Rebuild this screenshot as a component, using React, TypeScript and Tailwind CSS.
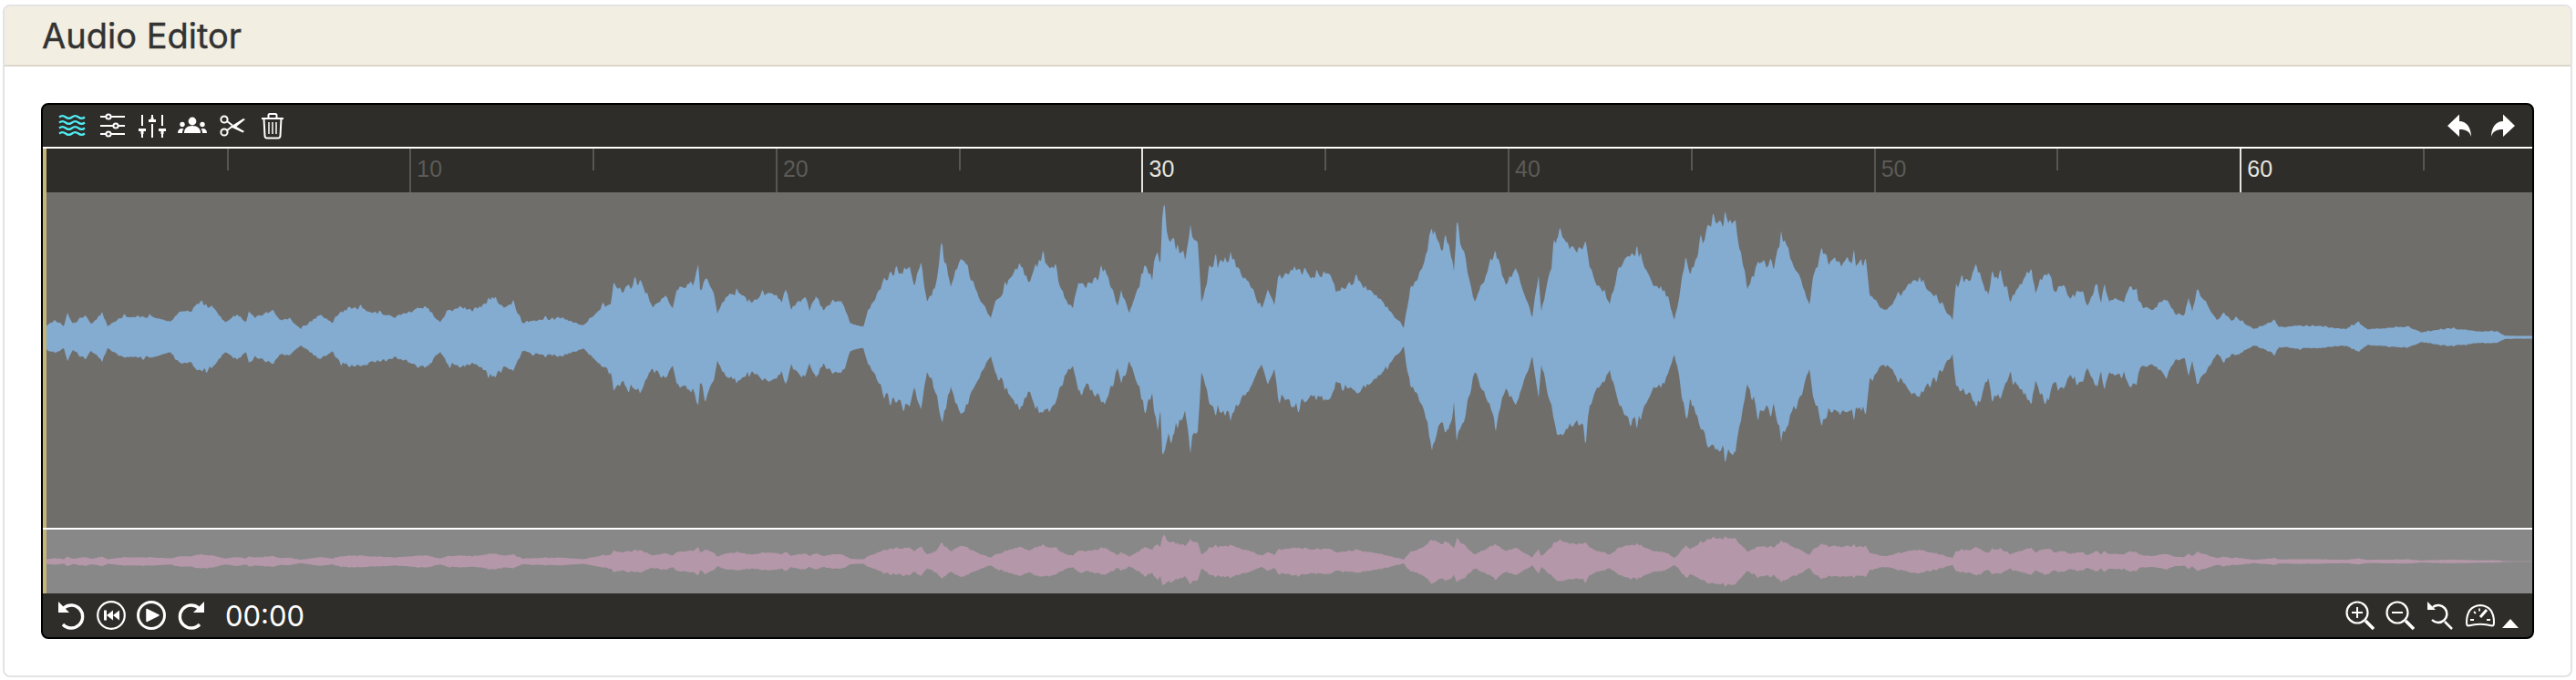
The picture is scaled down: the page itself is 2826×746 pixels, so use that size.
import React from "react";

// outline of the upper half of the wave, [page x, height above centre]
const HULL: [number, number][] = [
  [51,14],[60,20],[70,14],[74,30],[80,16],[93,27],[100,16],[112,30],[118,14],[133,25],[167,25],[187,18],[197,33],[207,30],[218,42],[233,37],[247,19],[260,28],[270,19],[273,33],[280,25],[300,33],[307,21],[317,23],[330,10],[350,27],[365,18],[372,30],[387,37],[433,25],[467,38],[483,18],[490,32],[507,37],
  [520,33],[543,50],[553,35],[563,43],[573,17],[593,22],[617,23],[640,14],[657,33],[670,43],[673,67],[683,58],[702,68],[717,37],[730,50],[738,37],[743,58],[760,67],[766,83],[768,56],[774,73],[783,53],[787,28],[793,45],[810,57],[823,42],[847,57],[857,43],[862,62],[868,35],[883,50],[888,33],[895,52],[903,33],[913,43],[923,47],[933,17],[947,13],[953,35],[960,47],[970,70],[993,82],[998,85],[1003,67],[1010,85],[1017,43],
  [1025,60],[1034,108],[1043,60],[1052,95],[1058,93],[1072,55],[1087,23],[1092,43],[1096,47],[1119,93],[1128,68],[1139,93],[1157,82],[1170,45],[1177,35],[1183,70],[1192,60],[1212,83],[1226,38],[1230,58],[1239,30],[1250,65],[1255,88],[1264,72],[1268,105],[1273,95],[1275,143],[1282,125],[1291,112],[1300,95],[1306,133],[1314,120],[1318,43],[1329,85],[1350,100],[1373,60],[1384,33],[1391,58],[1398,42],[1402,73],[1420,85],[1436,75],[1460,78],[1465,58],[1489,68],[1513,48],[1540,12],[1547,60],[1556,70],[1563,97],[1571,137],[1578,113],[1589,112],[1595,78],[1598,130],[1607,100],[1618,42],[1632,83],[1641,103],[1652,66],[1663,83],[1681,25],[1688,73],[1691,32],[1699,73],[1708,122],[1717,117],[1730,107],[1739,115],[1748,72],[1759,53],[1766,43],[1777,85],[1790,102],[1799,103],[1812,67],[1826,57],[1837,22],[1844,57],[1849,97],[1855,80],[1873,132],[1895,140],[1904,140],[1913,83],[1917,60],[1929,90],[1946,87],[1954,125],[1969,87],[1985,42],[1989,72],[1999,105],[2007,92],[2047,92],[2051,53],[2067,32],[2094,63],[2105,73],[2125,47],[2142,22],
  [2146,62],[2162,73],[2169,85],[2181,50],[2185,78],[2195,73],[2205,45],[2213,58],[2229,83],[2233,55],[2238,72],[2247,80],[2252,57],[2264,63],[2271,50],[2285,55],[2290,38],[2301,65],[2305,42],[2309,65],[2314,42],[2320,50],[2330,42],[2336,65],[2344,57],[2348,37],[2362,34],[2376,47],[2387,28],[2397,27],[2401,47],[2405,28],[2410,60],[2420,43],[2432,20],[2440,30],[2448,20],[2453,23],[2473,10],[2495,21],[2501,12],[2520,14],[2548,13],[2573,10],[2588,18],[2597,10],[2642,13],[2656,6],[2687,11],[2720,7],[2739,7],[2748,2],[2780,1.5],
];

const hullAt = (x: number) => {
  let i = 0;
  while (i < HULL.length - 2 && HULL[i + 1][0] < x) i++;
  const [x0, a0] = HULL[i];
  const [x1, a1] = HULL[i + 1];
  const t = Math.min(1, Math.max(0, (x - x0) / (x1 - x0)));
  return a0 + (a1 - a0) * t;
};

const hash = (n: number) => {
  const s = Math.sin(n * 127.1 + 11.7) * 43758.5453;
  return s - Math.floor(s);
};

const noise = (x: number, cell: number, seed: number) => {
  const p = x / cell;
  const i = Math.floor(p);
  const f = p - i;
  return hash(i + seed) * (1 - f) + hash(i + 1 + seed) * f;
};

// thin needles on top of the body, strongest in the loud passages
const needle = (x: number, seed: number) => {
  const cell = 7;
  const i = Math.floor(x / cell);
  if (hash(i + seed) < 0.55) return 0;
  const c = (i + 0.5) * cell;
  return Math.max(0, 1 - Math.abs(x - c) / 2.5) * hash(i + seed + 7);
};

// builds the closed outline, y = centre -/+ amplitude
const wavePath = (centre: number, scale: number) => {
  const top: string[] = [];
  const bottom: string[] = [];
  for (let x = 51; x <= 2779; x++) {
    const a = hullAt(x);
    const n = 0.84 + 0.1 * noise(x, 2, 1) + 0.16 * needle(x, 3);
    const m = 0.84 + 0.1 * noise(x, 2, 1) + 0.16 * needle(x, 90);
    top.push(`${x - 51},${(centre - a * n * scale).toFixed(1)}`);
    bottom.unshift(`${x - 51},${(centre + a * m * 0.98 * scale).toFixed(1)}`);
  }
  return `M${top.join("L")}L${bottom.join("L")}Z`;
};

const MAIN_PATH = wavePath(159, 1);
const OVERVIEW_PATH = wavePath(35, 0.2);

type IconProps = { children: React.ReactNode };

const Icon = ({ children }: IconProps) => (
  <svg width="32" height="32" viewBox="0 0 32 32" fill="none" stroke="white" strokeWidth="2" className="flex-none">
    {children}
  </svg>
);

const ARROW = "M3 16L16 3.500V11C24 11 29 18 29 28 27 21 22 20 16 20V28z";

const TICKS = [
  { label: "" }, { label: "10" }, { label: "" }, { label: "20" }, { label: "" }, { label: "30", bright: true },
  { label: "" }, { label: "40" }, { label: "" }, { label: "50" }, { label: "" }, { label: "60", bright: true }, { label: "" },
];

export default function App() {
  return (
    <div className="bg-white pt-[5px] pl-[3px] pr-[4px] h-[746px]" style={{ fontFamily: "Inter, 'Liberation Sans', sans-serif" }}>
      <div className="border-2 border-[#e3e3e3] rounded-[8px] overflow-hidden bg-white">
        <div className="h-[66px] bg-[#f2eee1] border-b-2 border-[#dbd7ca] pl-[41px] flex items-center">
          <h1 className="text-[38px] font-normal text-[#333333] leading-none [-webkit-text-stroke:0.4px_#333333]">Audio Editor</h1>
        </div>
        <div className="p-10">
          <div className="border-2 border-black rounded-[8px] overflow-hidden bg-[#2e2d29]">
            {/* top toolbar */}
            <div className="h-[46px] px-4 flex items-center justify-between">
              <div className="flex items-center gap-3">
                <Icon>
                  <g stroke="#50eef5" strokeWidth="2.200">
                    <path d="M2 6.500q3.500-2.600 7 0t7 0 7 0 7 0" />
                    <path d="M2 12.500q3.500-2.600 7 0t7 0 7 0 7 0" />
                    <path d="M2 18.500q3.500-2.600 7 0t7 0 7 0 7 0" />
                    <path d="M2 24.500q3.500-2.600 7 0t7 0 7 0 7 0" />
                  </g>
                </Icon>
                <Icon>
                  <path d="M3 6h27M3 16h27M3 25h27" />
                  <circle cx="12" cy="6" r="2.600" fill="#2e2d29" />
                  <circle cx="20" cy="16" r="2.600" fill="#2e2d29" />
                  <circle cx="12" cy="25" r="2.600" fill="#2e2d29" />
                </Icon>
                <Icon>
                  <path d="M5 4v12M5 25v4M16 4v3M16 14v15M27 4v12M27 25v4" />
                  <path d="M1 19h8v3H1zM12 9h8v3h-8zM23 19h8v3h-8z" fill="white" stroke="none" />
                  <path d="M3.500 22h3v3h-3zM14.500 7h3v2h-3zM25.500 22h3v3h-3z" fill="white" stroke="none" />
                </Icon>
                <Icon>
                  <g fill="white" stroke="none">
                    <circle cx="16" cy="11" r="4.400" />
                    <path d="M7 24c0-5 3-8 9-8s9 3 9 8z" />
                    <circle cx="5" cy="14.500" r="2.700" />
                    <circle cx="27" cy="14.500" r="2.700" />
                    <path d="M0 24c0-3 1.500-5 4.500-5 1 0 1.500.2 2 .5C5 21 5 22.500 5 24zM32 24c0-3-1.500-5-4.500-5-1 0-1.500.2-2 .5 1.500 1.500 1.500 3 1.500 4.500z" />
                  </g>
                </Icon>
                <Icon>
                  <circle cx="7" cy="9" r="3.600" />
                  <circle cx="7" cy="23" r="3.600" />
                  <path d="M10 11l6 4.500M10 21l6-4.500" />
                  <path d="M14 17L28 8l2 1-11 9zM17 15l12 7-1.500 1.500L13.500 17z" fill="white" stroke="none" />
                </Icon>
                <Icon>
                  <path d="M4 8h24M11.500 8V4.500q0-1.500 1.500-1.500h6q1.500 0 1.500 1.500V8" />
                  <path d="M6.500 8l1 19q.1 2.500 2.500 2.500h12q2.400 0 2.500-2.500l1-19" />
                  <path d="M12 12v13M16 12v13M20 12v13" strokeWidth="1.500" />
                </Icon>
              </div>
              <div className="flex items-center gap-4">
                <Icon>
                  <path d={ARROW} fill="white" stroke="none" />
                </Icon>
                <Icon>
                  <path d={ARROW} fill="white" stroke="none" transform="matrix(-1 0 0 1 32 0)" />
                </Icon>
              </div>
            </div>
            <div className="h-[2px] bg-white" />

            {/* time ruler */}
            <div className="h-[48px] border-l-4 border-[#c4b57a] flex overflow-hidden">
              <div className="w-[197.500px] flex-none" />
              {TICKS.map((t, i) => (
                <div key={i} className="w-[200.800px] flex-none flex items-start">
                  {t.label ? (
                    <>
                      <div className={t.bright ? "w-[2px] h-full bg-[#e6e4de]" : "w-[2px] h-full bg-[#575652]"} />
                      <span
                        className={t.bright ? "ml-[6px] mt-[7px] text-[25px] leading-[30px] text-[#e6e4de]" : "ml-[6px] mt-[7px] text-[25px] leading-[30px] text-[#5c5b57]"}
                        style={{ fontFamily: "'Liberation Sans', sans-serif" }}
                      >
                        {t.label}
                      </span>
                    </>
                  ) : (
                    <div className="w-[2px] h-6 bg-[#575652]" />
                  )}
                </div>
              ))}
            </div>

            {/* main wave */}
            <div className="h-[368px] border-l-4 border-[#c4b57a] bg-[#6f6e6b]">
              <svg width="2728" height="368" className="block">
                <path d={MAIN_PATH} fill="#84abd0" />
              </svg>
            </div>
            <div className="h-[2px] bg-white" />

            {/* overview */}
            <div className="h-[70px] border-l-4 border-[#c4b57a] bg-[#888888]">
              <svg width="2728" height="70" className="block">
                <path d={OVERVIEW_PATH} fill="#b497a8" />
              </svg>
            </div>

            {/* bottom bar */}
            <div className="h-[48px] px-[15px] flex items-center justify-between">
              <div className="flex items-center gap-3">
                <Icon>
                  <path d="M8 8A12.500 12.500 0 1 1 7 26" strokeWidth="3.400" />
                  <path d="M2 1v12h12z" fill="white" stroke="none" />
                </Icon>
                <Icon>
                  <circle cx="16" cy="16" r="14.800" strokeWidth="2.200" />
                  <path d="M8 10.500h3v11H8zM18 10.500v11l-7-5.500zM25 10.500v11l-7-5.500z" fill="white" stroke="none" />
                </Icon>
                <Icon>
                  <circle cx="16" cy="16" r="14.500" strokeWidth="3" />
                  <path d="M11 9.500L24 16l-13 6.500z" fill="white" stroke="white" strokeWidth="1.500" strokeLinejoin="round" />
                </Icon>
                <Icon>
                  <path d="M24 8A12.500 12.500 0 1 0 25 26" strokeWidth="3.400" />
                  <path d="M30 1v12H18z" fill="white" stroke="none" />
                </Icon>
                <span className="ml-[9px] text-[31px] leading-none text-white">00:00</span>
              </div>
              <div className="flex items-center">
                <div className="flex items-center gap-3">
                  <Icon>
                    <circle cx="13" cy="13" r="11.500" strokeWidth="2.200" />
                    <path d="M7 13h12M13 7v12" strokeWidth="2" />
                    <path d="M22 22l9 9" strokeWidth="3.500" />
                  </Icon>
                  <Icon>
                    <circle cx="13" cy="13" r="11.500" strokeWidth="2.200" />
                    <path d="M7 13h12" strokeWidth="2" />
                    <path d="M22 22l9 9" strokeWidth="3.500" />
                  </Icon>
                  <Icon>
                    <path d="M8 7A9.500 9.500 0 1 1 7 21" strokeWidth="2.500" />
                    <path d="M2 1v9h9z" fill="white" stroke="none" />
                    <path d="M21 23l8 8" strokeWidth="2.500" />
                  </Icon>
                  <Icon>
                    <path d="M3 27.500Q1 27.500 1 24 1 6 16 5 31 6 31 24 31 27.500 29 27.500 16 24 3 27.500z" strokeWidth="2" />
                    <path d="M16 18l7-8" strokeWidth="3" />
                    <path d="M5 21h4M27 21h-4M9 12l2 2M15 8.500v3" strokeWidth="1.800" />
                  </Icon>
                </div>
                <svg width="18" height="10" viewBox="0 0 18 10" className="ml-2 mt-[17px] flex-none">
                  <path d="M9 0l9 10H0z" fill="white" />
                </svg>
              </div>
            </div>
          </div>
        </div>
      </div>
    </div>
  );
}
